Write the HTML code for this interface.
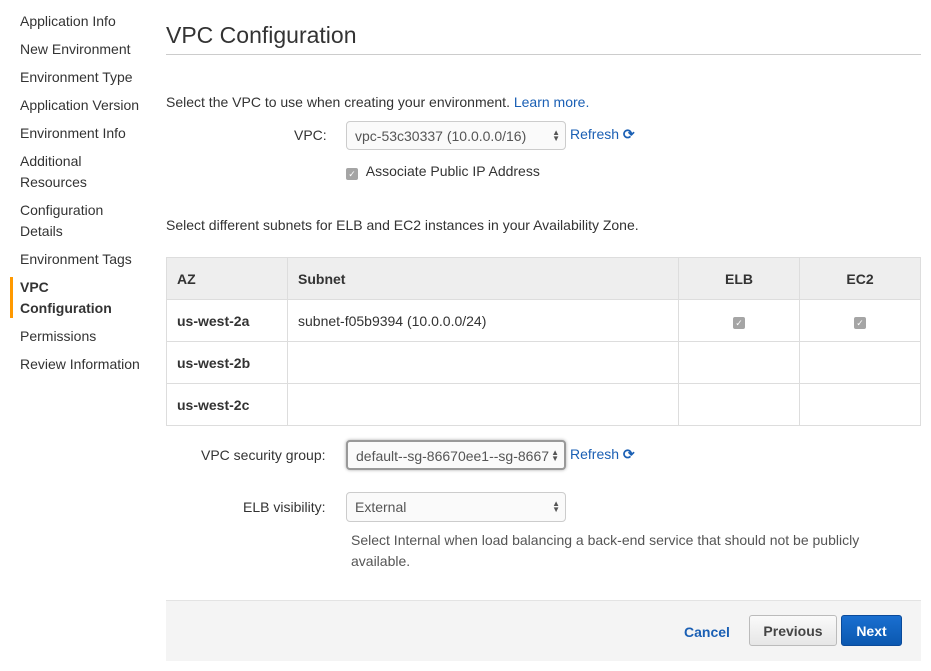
<!DOCTYPE html>
<html><head><style>
body{margin:0;width:931px;height:671px;background:#fff;font-family:"Liberation Sans",Arial,sans-serif;font-size:14px;color:#333;position:relative;overflow:hidden}
.a{position:absolute;white-space:nowrap}
.nav{left:20px;line-height:21px}
.sel{position:absolute;border:1px solid #ccc;border-radius:4px;background:#fafafa;height:29px;box-sizing:border-box;padding:6px 8px;font-size:14px;color:#555;white-space:nowrap;overflow:hidden}
.arr{position:absolute;right:5px;top:8px;font-size:8px;line-height:6px;color:#555}
table{position:absolute;left:166px;top:257px;border-collapse:collapse;width:755px}
td,th{border:1px solid #ddd;height:41px;padding:0 10px;text-align:left;font-size:14px}
th{background:#eee;font-weight:bold}
.cb{display:inline-block;width:12px;height:12px;background:#a5a5a5;border-radius:2px;color:#fff;font-size:9px;line-height:12px;text-align:center;vertical-align:-1px}
a{color:#1a5fb4;text-decoration:none}
</style></head><body>
<div class="a nav" style="top:11px">Application Info</div>
<div class="a nav" style="top:39px">New Environment</div>
<div class="a nav" style="top:67px">Environment Type</div>
<div class="a nav" style="top:95px">Application Version</div>
<div class="a nav" style="top:123px">Environment Info</div>
<div class="a nav" style="top:151px">Additional<br>Resources</div>
<div class="a nav" style="top:200px">Configuration<br>Details</div>
<div class="a nav" style="top:249px">Environment Tags</div>
<div class="a" style="left:10px;top:277px;width:3px;height:41px;background:#f90"></div>
<div class="a nav" style="top:277px;font-weight:bold">VPC<br>Configuration</div>
<div class="a nav" style="top:326px">Permissions</div>
<div class="a nav" style="top:354px">Review Information</div>

<div class="a" style="left:166px;top:22px;font-size:23px;color:#333">VPC Configuration</div>
<div class="a" style="left:166px;top:54px;width:755px;height:1px;background:#ccc"></div>
<div class="a" style="left:166px;top:94px">Select the VPC to use when creating your environment. <a>Learn more.</a></div>
<div class="a" style="left:294px;top:127px">VPC:</div>
<div class="sel" style="left:346px;top:121px;width:220px">vpc-53c30337 (10.0.0.0/16)<span class="arr">▲<br>▼</span></div>
<div class="a" style="left:570px;top:126px"><a>Refresh <span style="font-weight:bold">⟳</span></a></div>
<div class="a" style="left:346px;top:163px"><span class="cb">✓</span> &nbsp;Associate Public IP Address</div>
<div class="a" style="left:166px;top:217px">Select different subnets for ELB and EC2 instances in your Availability Zone.</div>

<table>
<tr><th style="width:100px">AZ</th><th style="width:370px">Subnet</th><th style="text-align:center;width:100px">ELB</th><th style="text-align:center">EC2</th></tr>
<tr><td style="font-weight:bold">us-west-2a</td><td>subnet-f05b9394 (10.0.0.0/24)</td><td style="text-align:center"><span class="cb">✓</span></td><td style="text-align:center"><span class="cb">✓</span></td></tr>
<tr><td style="font-weight:bold">us-west-2b</td><td></td><td></td><td></td></tr>
<tr><td style="font-weight:bold">us-west-2c</td><td></td><td></td><td></td></tr>
</table>

<div class="a" style="left:201px;top:447px">VPC security group:</div>
<div class="sel" style="left:346px;top:440px;width:220px;height:30px;border:2px solid #999;box-shadow:0 0 3px #aaa">default--sg-86670ee1--sg-8667<span class="arr">▲<br>▼</span></div>
<div class="a" style="left:570px;top:446px"><a>Refresh <span style="font-weight:bold">⟳</span></a></div>
<div class="a" style="left:243px;top:499px">ELB visibility:</div>
<div class="sel" style="left:346px;top:492px;width:220px;height:30px">External<span class="arr">▲<br>▼</span></div>
<div class="a" style="left:351px;top:530px;color:#555;line-height:21px">Select Internal when load balancing a back-end service that should not be publicly<br>available.</div>

<div class="a" style="left:166px;top:600px;width:755px;height:60px;background:#f4f4f4;border-top:1px solid #e3e3e3"></div>
<div class="a" style="left:684px;top:624px;font-weight:bold;color:#1a5fb4">Cancel</div>
<div class="a" style="left:749px;top:615px;width:88px;height:31px;box-sizing:border-box;border:1px solid #bbb;border-radius:3px;background:linear-gradient(#fafafa,#e6e6e6);text-align:center;line-height:31px;font-weight:bold;color:#444">Previous</div>
<div class="a" style="left:841px;top:615px;width:61px;height:31px;box-sizing:border-box;border:1px solid #0a4a9a;border-radius:3px;background:linear-gradient(#1a6fd0,#0b58b0);text-align:center;line-height:31px;font-weight:bold;color:#fff">Next</div>
</body></html>
